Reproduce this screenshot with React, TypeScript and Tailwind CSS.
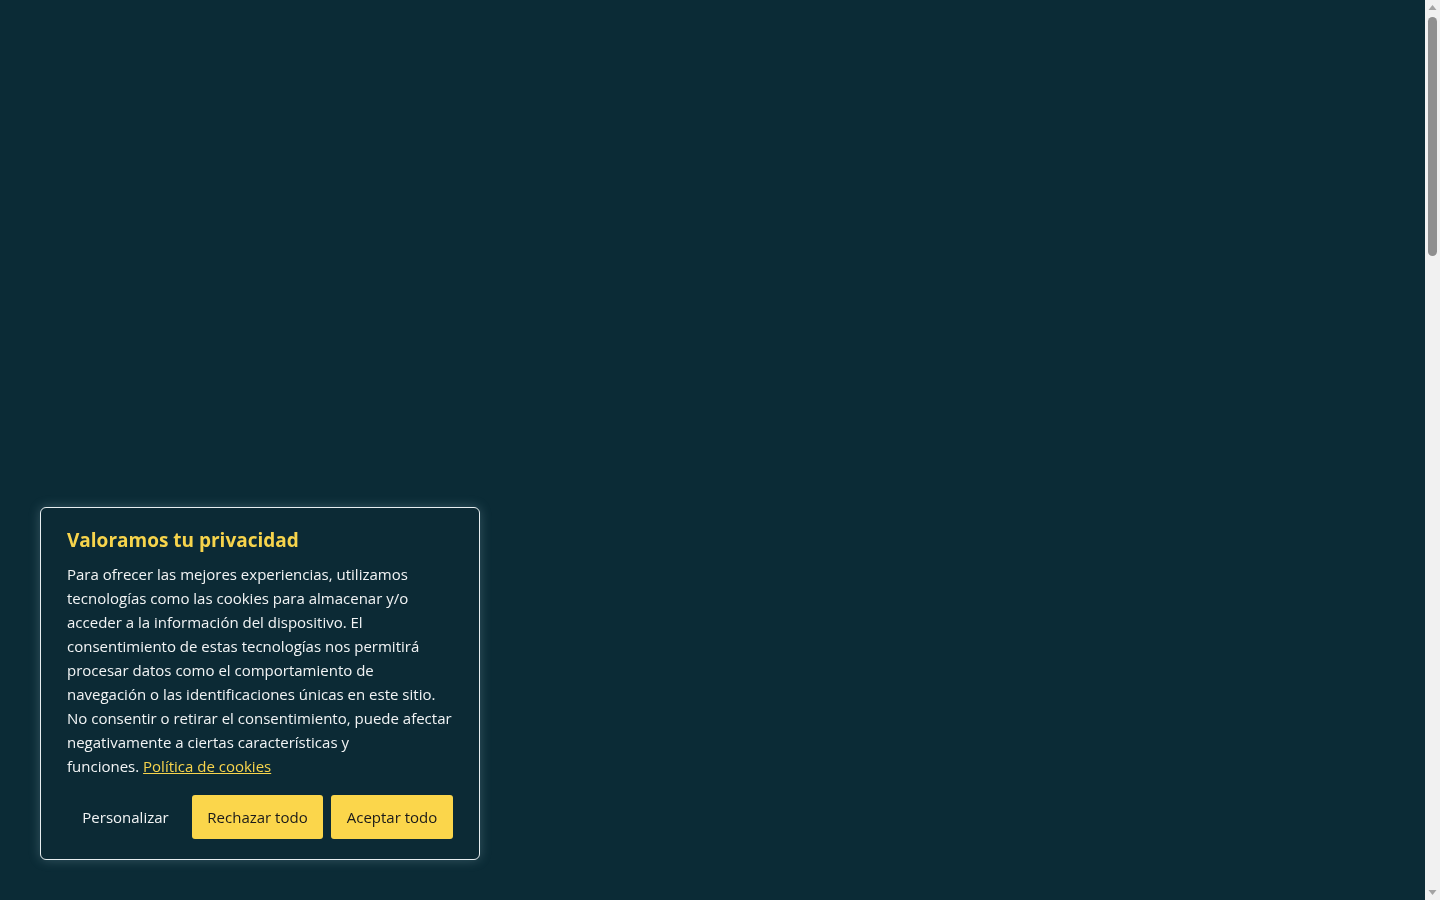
import React from "react";

const font = { fontFamily: '"Open Sans", "Noto Sans", sans-serif' };

function CookieBanner() {
  return (
    <div
      className="fixed left-[40px] bottom-[40px] w-[440px] rounded-[6px] border border-[#e8eef0] bg-[#0c2a35] px-[26px] pt-[19px] pb-[20px] shadow-[0_0_12px_rgba(180,220,230,0.25)]"
      style={font}
    >
      <h2 className="text-[19px] font-bold leading-[26px] text-[#f7d44c]">Valoramos tu privacidad</h2>
      <p className="mt-[9px] text-[15px] leading-[24px] text-[#f2f4f5]">
        Para ofrecer las mejores experiencias, utilizamos tecnologías como las cookies para almacenar y/o
        acceder a la información del dispositivo. El consentimiento de estas tecnologías nos permitirá
        procesar datos como el comportamiento de navegación o las identificaciones únicas en este sitio. No
        consentir o retirar el consentimiento, puede afectar negativamente a ciertas características y{" "}
        <span className="whitespace-nowrap">
          funciones.{"\u00a0"}
          <a href="#" className="text-[#f7d44c] underline">
            Política de cookies
          </a>
        </span>
      </p>
      <div className="mt-[17px] flex items-center gap-[8px]">
        <button className="h-[44px] w-[117px] text-center text-[15px] text-[#f2f4f5]">Personalizar</button>
        <button className="h-[44px] w-[131px] rounded-[3px] bg-[#fbd64b] text-center text-[15px] text-[#1a1a1a]">
          Rechazar todo
        </button>
        <button className="h-[44px] w-[122px] rounded-[3px] bg-[#fbd64b] text-center text-[15px] text-[#1a1a1a]">
          Aceptar todo
        </button>
      </div>
    </div>
  );
}

// Classic page scrollbar drawn along the right edge
function Scrollbar() {
  return (
    <div className="fixed right-0 top-0 h-full w-[15px] bg-[#f1f1f1]">
      <svg className="absolute left-0 top-0" width="15" height="15" viewBox="0 0 15 15">
        <path d="M3.5 10 L7.5 5 L11.5 10 Z" fill="#a3a3a3" />
      </svg>
      <div className="absolute left-[3px] top-[17px] h-[239px] w-[9px] rounded-full bg-[#8f8f8f]" />
      <svg className="absolute bottom-0 left-0" width="15" height="15" viewBox="0 0 15 15">
        <path d="M3.5 5 L11.5 5 L7.5 10 Z" fill="#a3a3a3" />
      </svg>
    </div>
  );
}

export default function App() {
  return (
    <div className="h-screen overflow-hidden bg-[#0b2b36]">
      <CookieBanner />
      <Scrollbar />
    </div>
  );
}
